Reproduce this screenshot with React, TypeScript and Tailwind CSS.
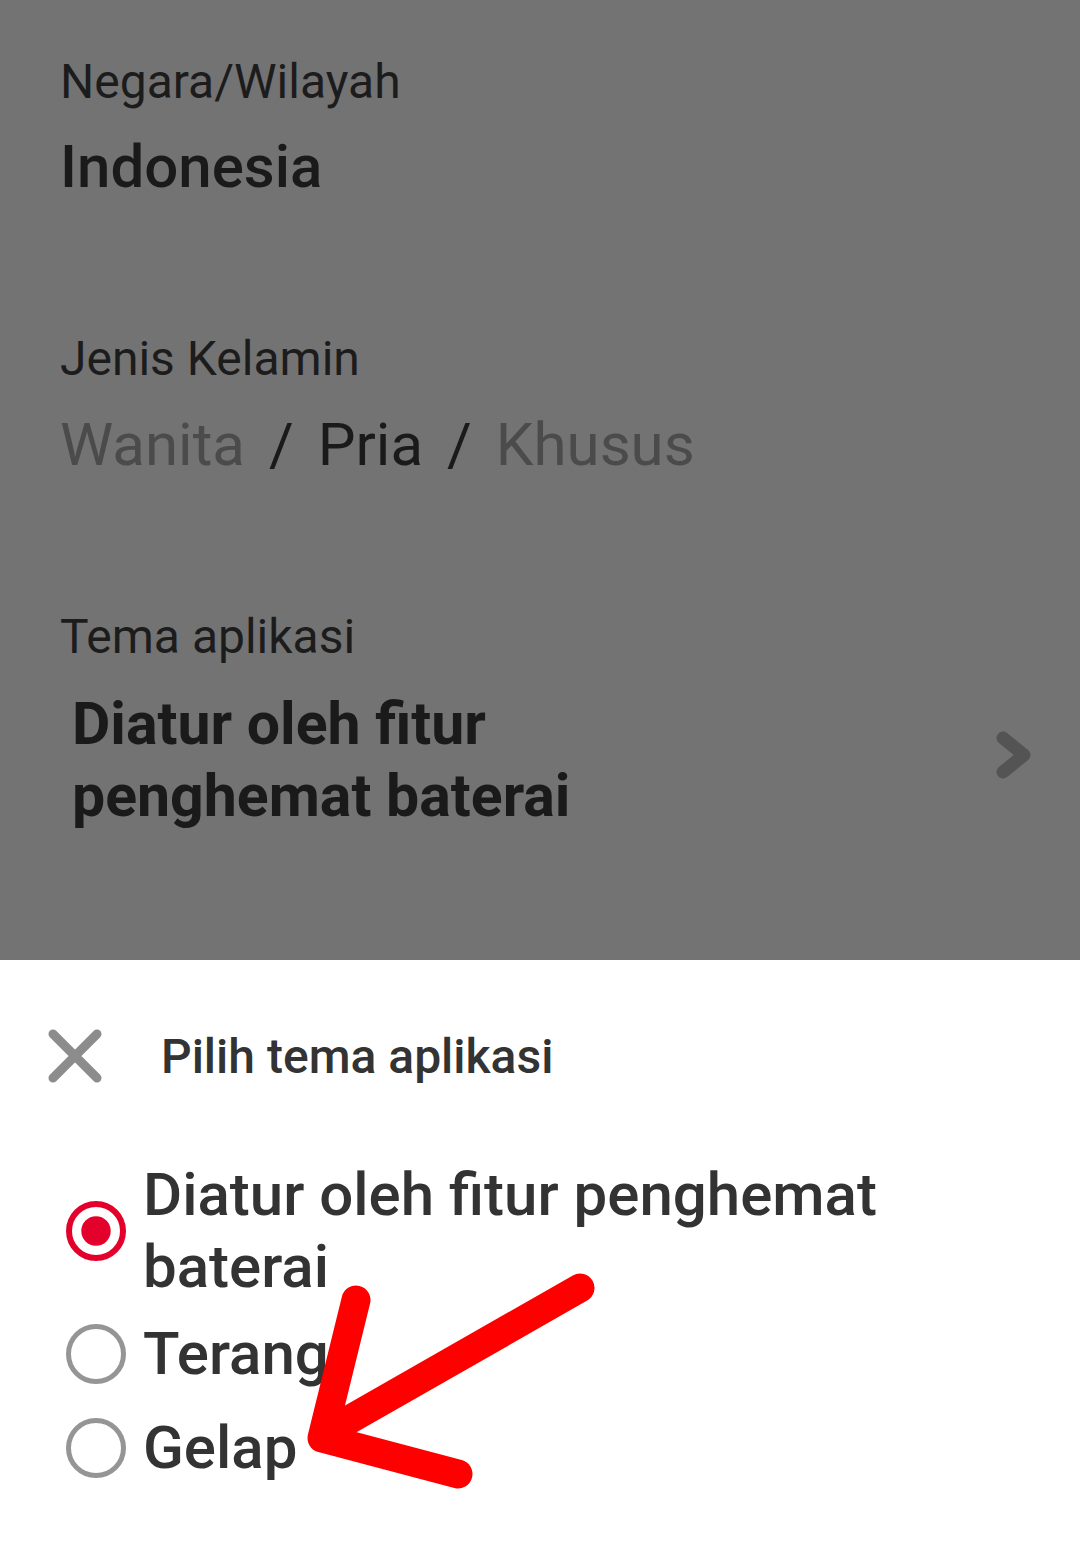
import { ReactNode } from 'react';

interface RadioOptionProps {
  label: ReactNode;
  checked?: boolean;
  className?: string;
}

function RadioDot({ checked }: { checked?: boolean }) {
  return (
    <svg width="60" height="60" viewBox="0 0 60 60" className="shrink-0">
      {checked ? (
        <>
          <circle cx="30" cy="30" r="27" fill="none" stroke="#e3002b" strokeWidth="6" />
          <circle cx="30" cy="30" r="14.7" fill="#e3002b" />
        </>
      ) : (
        <circle cx="30" cy="30" r="27.5" fill="none" stroke="#959595" strokeWidth="5" />
      )}
    </svg>
  );
}

function RadioOption({ label, checked, className = '' }: RadioOptionProps) {
  return (
    <div className={`flex items-center gap-[17px] ${className}`}>
      <RadioDot checked={checked} />
      <div className="text-[60px] leading-[72px] font-medium text-[#333333]">{label}</div>
    </div>
  );
}

export default function App() {
  return (
    <div className="flex h-[1568px] w-[1080px] flex-col font-['Roboto',sans-serif]">
      {/* dimmed settings page behind the sheet */}
      <div className="h-[960px] shrink-0 bg-[#737373] pl-[60px] pr-[43px] pt-[55px]">
        <div className="text-[48px] leading-[54px] text-[#1c1c1c]">Negara/Wilayah</div>
        <div className="mt-[22px] text-[60px] leading-[72px] font-medium text-[#1a1a1a]">Indonesia</div>

        <div className="mt-[129px] text-[48px] leading-[54px] text-[#1c1c1c]">Jenis Kelamin</div>
        <div className="mt-[23px] flex text-[60px] leading-[72px]">
          <span className="text-[#4b4b4b]">Wanita</span>
          <span className="ml-[24px] text-[#1a1a1a]">/</span>
          <span className="ml-[24px] text-[#1a1a1a]">Pria</span>
          <span className="ml-[24px] text-[#1a1a1a]">/</span>
          <span className="ml-[24px] text-[#4b4b4b]">Khusus</span>
        </div>

        <div className="mt-[129px] text-[48px] leading-[54px] text-[#1c1c1c]">Tema aplikasi</div>
        <div className="mt-[24px] flex items-start justify-between">
          <div className="pl-[12px] text-[59px] leading-[72px] font-bold text-[#1a1a1a]">
            Diatur oleh fitur
            <br />
            penghemat baterai
          </div>
          <svg width="48" height="64" viewBox="0 0 48 64" className="mt-[35px] shrink-0">
            <path
              d="M14 15 L35 32 L14 49"
              fill="none"
              stroke="#545454"
              strokeWidth="13"
              strokeLinecap="round"
              strokeLinejoin="round"
            />
          </svg>
        </div>
      </div>

      {/* bottom sheet */}
      <div className="relative flex-1 bg-white pt-[69px]">
        <div className="flex items-start pl-[48px]">
          <svg width="54" height="54" viewBox="0 0 54 54" className="shrink-0">
            <path
              d="M5 5 L49 49 M49 5 L5 49"
              stroke="#8c8c8c"
              strokeWidth="9"
              strokeLinecap="round"
            />
          </svg>
          <div className="ml-[59px] mt-[2px] text-[48px] leading-[52px] font-medium text-[#333333]">
            Pilih tema aplikasi
          </div>
        </div>

        <div className="mt-[76px] pl-[66px]">
          <RadioOption
            checked
            label={
              <>
                Diatur oleh fitur penghemat
                <br />
                baterai
              </>
            }
          />
          <RadioOption className="mt-[15px]" label="Terang" />
          <RadioOption className="mt-[22px]" label="Gelap" />
        </div>

        {/* red annotation arrow drawn over the options */}
        <svg
          className="pointer-events-none absolute left-0 top-0"
          width="1080"
          height="608"
          viewBox="0 0 1080 608"
        >
          <g fill="none" stroke="#ff0000" strokeWidth="29" strokeLinecap="round" strokeLinejoin="round">
            <path d="M356 340 L322 478 L458 514" />
            <path d="M580 328 L340 465" />
          </g>
        </svg>
      </div>
    </div>
  );
}
